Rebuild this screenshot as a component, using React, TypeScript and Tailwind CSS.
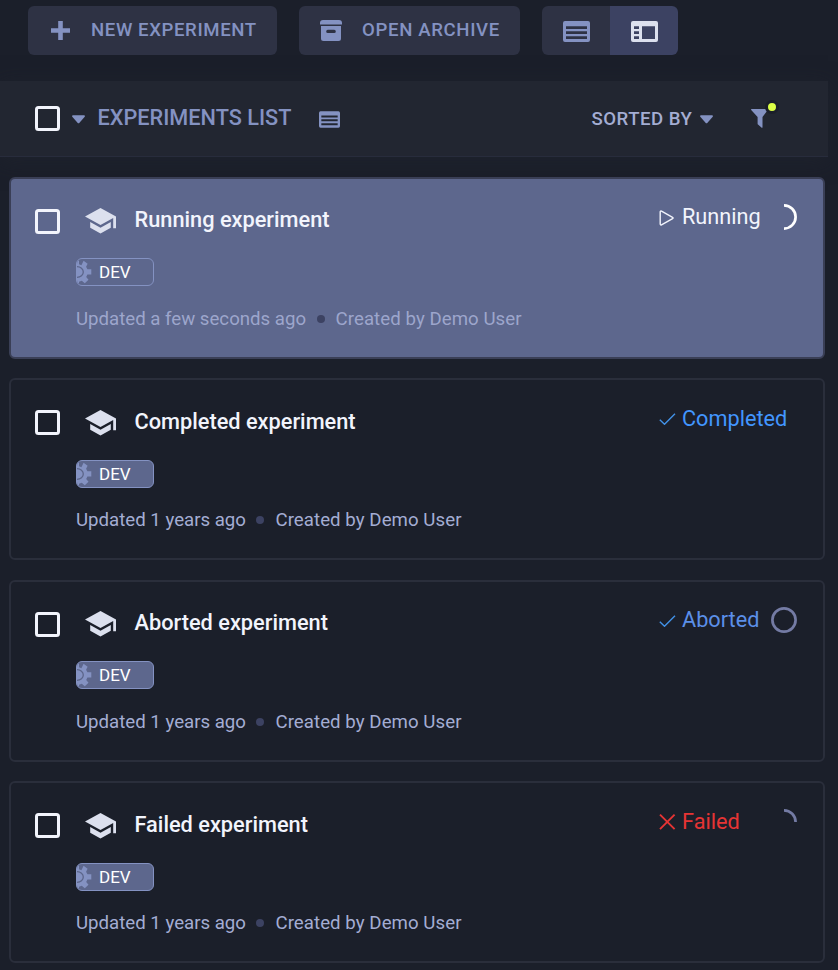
import React from "react";

const experiments = [
  { name: "Running experiment", updated: "Updated a few seconds ago", status: "Running", active: true },
  { name: "Completed experiment", updated: "Updated 1 years ago", status: "Completed", active: false },
  { name: "Aborted experiment", updated: "Updated 1 years ago", status: "Aborted", active: false },
  { name: "Failed experiment", updated: "Updated 1 years ago", status: "Failed", active: false },
];

const statusColors: Record<string, string> = {
  Running: "text-[#f2f4fc]",
  Completed: "text-[#4296ff]",
  Aborted: "text-[#5b8fe8]",
  Failed: "text-[#e63434]",
};

function Checkbox() {
  return <div className="size-[25px] shrink-0 rounded-[3.5px] border-[3px] border-[#f2f4fc]" />;
}

function Caret() {
  return (
    <svg className="h-[9px] w-[13px] shrink-0" viewBox="0 0 13 9" fill="#8492c2">
      <path d="M1 .3h11c.9 0 1.2.8.7 1.4L7.5 7.8c-.6.7-1.400.7-2 0L.3 1.700C-.2 1.100.1.3 1 .3z" />
    </svg>
  );
}

function TableIcon({ className }: { className: string }) {
  return (
    <svg className={className} viewBox="0 0 27 21" fill="#8492c2">
      <path
        fillRule="evenodd"
        d="M2 0h23a2 2 0 0 1 2 2v17a2 2 0 0 1-2 2H2a2 2 0 0 1-2-2V2a2 2 0 0 1 2-2zM3 5.200v2.700h21V5.200zM3 10.300v2.600h21v-2.600zM3 15.300v2.700h21v-2.700z"
      />
    </svg>
  );
}

function SplitIcon() {
  return (
    <svg className="h-[21px] w-[27px]" viewBox="0 0 27 21" fill="#dce0ee">
      <path
        fillRule="evenodd"
        d="M2 0h23a2 2 0 0 1 2 2v17a2 2 0 0 1-2 2H2a2 2 0 0 1-2-2V2a2 2 0 0 1 2-2zM3 5.200v2.700h5V5.200zM3 10.300v2.600h5v-2.600zM3 15.300v2.700h5v-2.700zM11 5.200V18h13V5.200z"
      />
    </svg>
  );
}

function ArchiveIcon() {
  return (
    <svg className="h-[21px] w-[22px]" viewBox="0 0 22 21" fill="#8492c2">
      <path d="M3 0h16a3 3 0 0 1 3 3v1.500H0V3a3 3 0 0 1 3-3z" />
      <path
        fillRule="evenodd"
        d="M1 6h20v12.500a2.500 2.500 0 0 1-2.500 2.500h-15A2.500 2.500 0 0 1 1 18.500zM7.800 9.800a1.500 1.500 0 0 0 0 3.200h6.400a1.500 1.500 0 0 0 0-3.200z"
      />
    </svg>
  );
}

function CapIcon() {
  return (
    <svg className="h-[26px] w-[32px] shrink-0" viewBox="0 0 32 26" fill="#dce0ee">
      <path d="M15.500 0 31 8.500v11.700h-2.800V10.100L15.500 17 0 8.500z" />
      <path d="M5.200 14v5.700L15.500 25.500l10.300-5.800V14l-10.300 5.700z" />
    </svg>
  );
}

function GearIcon() {
  return (
    <svg className="h-[24px] w-[15px] shrink-0" viewBox="0 0 15 24" fill="#8492c2">
      <path d="M0 1h2v3.200l2.400 1L6.600.8l4 2.900-1.500 3 1.300 2.500h3.900v5.200h-3.900l-1.200 2.700 2.300 2.700-3.700 3.500-3-2.600-2.800 1V23H0z" />
      <path d="M0 6.600c3.600 0 6.300 2.400 6.300 5.400s-2.700 5.400-6.300 5.400" fill="none" stroke="#5b658a" strokeWidth="1.300" />
    </svg>
  );
}

function StatusIcon({ status }: { status: string }) {
  return (
    <svg
      className="h-[18px] w-[18px] shrink-0"
      viewBox="0 0 18 18"
      fill="none"
      stroke="currentColor"
      strokeWidth={status === "Failed" ? 1.9 : 1.4}
      strokeLinejoin="round"
    >
      {status === "Running" && <path d="M1.200 2.900v12.200c0 .8.700 1 1.300.700L13.600 9.600c.6-.3.600-.9 0-1.200L2.500 2.200c-.6-.3-1.300-.1-1.300.7z" />}
      {(status === "Completed" || status === "Aborted") && <path d="M.8 9.800 5.500 14.300 16 3.700" stroke="#4292e8" />}
      {status === "Failed" && <path d="M1 1.600 15.600 16.100M15.600 1.600 1 16.100" />}
    </svg>
  );
}

function Spinner({ status }: { status: string }) {
  if (status === "Completed") return null;
  return (
    <svg className="size-[26px] shrink-0" viewBox="0 0 26 26" fill="none" strokeWidth="2.700">
      {status === "Running" && <path d="M13 1.350a11.600 11.600 0 0 1 0 23.200" stroke="#fff" />}
      {status === "Aborted" && <circle cx="13" cy="13" r="11.600" stroke="#747ba4" />}
      {status === "Failed" && <path d="M13 1.350A11.600 11.600 0 0 1 24.600 13" stroke="#747ba4" />}
    </svg>
  );
}

function Card({ name, updated, status, active }: (typeof experiments)[number]) {
  return (
    <article
      className={`flex h-[182px] shrink-0 flex-col rounded-[6px] border-2 ${
        active ? "border-[#3a3f56] bg-[#5d678d]" : "border-[#2a2e3b] bg-[#1b1f2a]"
      }`}
    >
      <div className="mt-[29.500px] flex h-[26px] items-center pl-[24px]">
        <Checkbox />
        <div className="ml-[25px] flex">
          <CapIcon />
        </div>
        <h2 className="-mt-[2px] ml-[17.500px] w-[524px] text-[21.750px] leading-[26px] font-medium whitespace-nowrap text-[#f2f4fc]">
          {name}
        </h2>
        <div className={`-mt-[8px] flex w-[112px] items-center ${statusColors[status]}`}>
          <div className="mt-[1px] flex">
            <StatusIcon status={status} />
          </div>
          <span className="ml-[5.500px] text-[21.700px] leading-[26px]">{status}</span>
        </div>
        <div className="-mt-[8px] flex">
          <Spinner status={status} />
        </div>
      </div>
      <div className="mt-[24px] ml-[65px] flex h-[28px] w-[77.500px] items-center overflow-hidden rounded-[6px] border-[1.500px] border-[#8492c2] bg-[#5d678d]">
        <GearIcon />
        <span className="ml-[7px] text-[17px] leading-[24px] text-white">DEV</span>
      </div>
      <div className="mt-[20.500px] ml-[65px] flex items-center text-[18.650px] leading-[24px] whitespace-nowrap text-[#a4add3]">
        <span className={active ? "opacity-90" : ""}>{updated}</span>
        <span className="mr-[11px] ml-[10.500px] size-[8px] rounded-full bg-[#3c4262]" />
        <span className={active ? "tracking-[0.06px] opacity-90" : "tracking-[0.06px]"}>Created by Demo User</span>
      </div>
    </article>
  );
}

export default function App() {
  return (
    <div className="flex h-[970px] w-[838px] flex-col overflow-hidden bg-[#1b1f2a] font-['Roboto',sans-serif]">
      <div className="flex h-[81px] shrink-0 items-start gap-[22px] pt-[5.500px] pl-[28px]">
        <button className="flex h-[49.500px] w-[249px] items-center rounded-[6px] bg-[#2e3244] pl-[23px] text-[18.600px] font-medium tracking-[0.6px] whitespace-nowrap text-[#8492c2]">
          <svg className="size-[19px]" viewBox="0 0 19 19" fill="#8492c2">
            <path d="M7.200 0h4.600v7.200H19v4.600h-7.200V19H7.200v-7.200H0V7.200h7.200z" />
          </svg>
          <span className="mt-[2px] ml-[21px]">NEW EXPERIMENT</span>
        </button>
        <button className="flex h-[49.500px] w-[221px] items-center rounded-[6px] bg-[#2e3244] pl-[21px] text-[18.600px] font-medium tracking-[0.650px] whitespace-nowrap text-[#8492c2]">
          <ArchiveIcon />
          <span className="mt-[2px] ml-[20px]">OPEN ARCHIVE</span>
        </button>
        <div className="flex h-[49.500px] w-[136px] overflow-hidden rounded-[6px]">
          <div className="flex flex-1 items-center justify-center bg-[#2e3244]">
            <TableIcon className="mt-[2px] h-[21px] w-[27px]" />
          </div>
          <div className="flex flex-1 items-center justify-center bg-[#3c4262] pt-[2px]">
            <SplitIcon />
          </div>
        </div>
      </div>

      <header className="flex h-[76px] w-[828px] shrink-0 items-center border-b-[1.500px] border-[#282c3c] bg-[#222631] pl-[35px] shadow-[0_4px_20px_rgba(34,37,48,0.500)]">
        <Checkbox />
        <div className="mt-[2px] ml-[12px] flex">
          <Caret />
        </div>
        <h1 className="ml-[12.500px] w-[221px] text-[21.700px] font-medium whitespace-nowrap text-[#8492c2]">EXPERIMENTS LIST</h1>
        <TableIcon className="mt-[1px] h-[17px] w-[21px]" />
        <span className="mt-[2px] ml-[252px] w-[108px] text-[18.600px] font-medium tracking-[0.5px] whitespace-nowrap text-[#a4add3]">
          SORTED BY
        </span>
        <div className="mt-[2px] flex">
          <Caret />
        </div>
        <div className="relative ml-[38px]">
          <svg className="h-[19px] w-[17px]" viewBox="0 0 17 19" fill="#8492c2">
            <path d="M.5 0h16c.5 0 .6.6.3 1l-5.300 7v10.300c0 .6-.4.7-.8.4L7 15.600a1 1 0 0 1-.4-.8V8L.2 1C-.1.600 0 0 .5 0z" />
          </svg>
          <span className="absolute -top-[9px] left-[14px] size-[14px] rounded-full border-[3px] border-[#1b1f2a] bg-[#dcff46]" />
        </div>
      </header>

      <main className="flex w-[835px] flex-col gap-[19.500px] pt-[19.500px] pr-[10px] pl-[9px]">
        {experiments.map((e) => (
          <Card key={e.name} {...e} />
        ))}
      </main>
    </div>
  );
}
